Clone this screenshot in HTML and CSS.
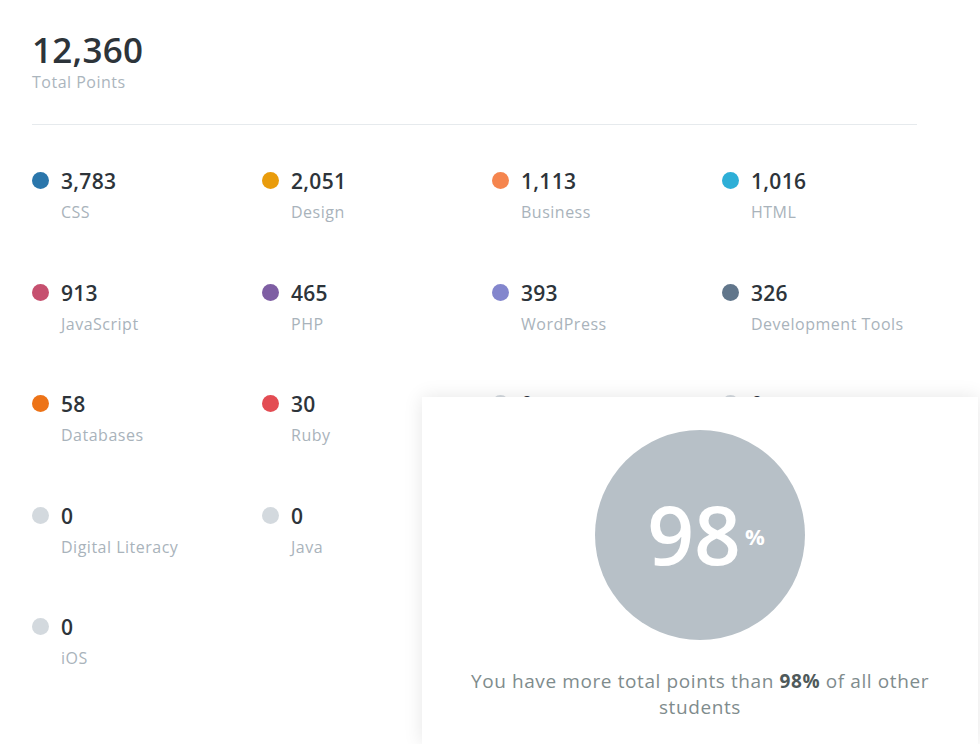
FILE: index.html
```html
<!DOCTYPE html>
<html>
<head>
<meta charset="utf-8">
<link rel="stylesheet" href="styles.css">
</head>
<body>
<div class="page">
  <div class="total">
    <div class="total-num">12,360</div>
    <div class="total-label">Total Points</div>
  </div>
  <hr class="divider">
  <div class="grid">
    <div class="item"><span class="dot c-css"></span><div><div class="num">3,783</div><div class="lbl">CSS</div></div></div>
    <div class="item"><span class="dot c-design"></span><div><div class="num">2,051</div><div class="lbl">Design</div></div></div>
    <div class="item"><span class="dot c-business"></span><div><div class="num">1,113</div><div class="lbl">Business</div></div></div>
    <div class="item"><span class="dot c-html"></span><div><div class="num">1,016</div><div class="lbl">HTML</div></div></div>
    <div class="item"><span class="dot c-js"></span><div><div class="num">913</div><div class="lbl">JavaScript</div></div></div>
    <div class="item"><span class="dot c-php"></span><div><div class="num">465</div><div class="lbl">PHP</div></div></div>
    <div class="item"><span class="dot c-wp"></span><div><div class="num">393</div><div class="lbl">WordPress</div></div></div>
    <div class="item"><span class="dot c-dev"></span><div><div class="num">326</div><div class="lbl">Development Tools</div></div></div>
    <div class="item"><span class="dot c-db"></span><div><div class="num">58</div><div class="lbl">Databases</div></div></div>
    <div class="item"><span class="dot c-ruby"></span><div><div class="num">30</div><div class="lbl">Ruby</div></div></div>
    <div class="item"><span class="dot c-none"></span><div><div class="num">0</div><div class="lbl">Python</div></div></div>
    <div class="item"><span class="dot c-none"></span><div><div class="num">0</div><div class="lbl">Game Development</div></div></div>
    <div class="item"><span class="dot c-none"></span><div><div class="num">0</div><div class="lbl">Digital Literacy</div></div></div>
    <div class="item"><span class="dot c-none"></span><div><div class="num">0</div><div class="lbl">Java</div></div></div>
    <div class="item"><span class="dot c-none"></span><div><div class="num">0</div><div class="lbl">C#</div></div></div>
    <div class="item"><span class="dot c-none"></span><div><div class="num">0</div><div class="lbl">Android</div></div></div>
    <div class="item"><span class="dot c-none"></span><div><div class="num">0</div><div class="lbl">iOS</div></div></div>
  </div>
</div>
<div class="panel">
  <div class="circle"><span class="pct">98</span><span class="pct-sign">%</span></div>
  <p class="rank">You have more total points than <strong>98%</strong> of all other students</p>
</div>
</body>
</html>
```
FILE: styles.css
```css
html, body {
  margin: 0;
  padding: 0;
  background: #fff;
  overflow: hidden;
}
body {
  font-family: "Open Sans", "Noto Sans", sans-serif;
  width: 980px;
  height: 744px;
  position: relative;
}
.page {
  padding: 30px 0 0 32px;
}
.total-num {
  font-size: 35px;
  font-weight: 600;
  color: #2d343a;
  line-height: 40px;
  letter-spacing: 0.3px;
}
.total-label {
  font-size: 16px;
  color: #abb5bd;
  line-height: 20px;
  margin-top: 2px;
  letter-spacing: 0.5px;
}
.divider {
  width: 885px;
  margin: 32px 0 0 0;
  border: 0;
  border-top: 1px solid #e6eaed;
  height: 0;
}
.grid {
  display: grid;
  grid-template-columns: repeat(4, 230px);
  grid-auto-rows: 111.5px;
  margin-top: 44px;
}
.item {
  display: flex;
  align-items: flex-start;
  gap: 12px;
}
.dot {
  width: 17px;
  height: 17px;
  border-radius: 50%;
  flex: none;
  margin-top: 3px;
}
.num {
  font-size: 21px;
  font-weight: 600;
  color: #2d343a;
  line-height: 24px;
  letter-spacing: 0.3px;
}
.lbl {
  font-size: 16px;
  color: #a9b3bb;
  line-height: 20px;
  margin-top: 9px;
  letter-spacing: 0.5px;
}
.c-css { background: #2a76ab; }
.c-design { background: #e99c0c; }
.c-business { background: #f5854e; }
.c-html { background: #2eafd7; }
.c-js { background: #c6506f; }
.c-php { background: #7e5ea3; }
.c-wp { background: #8386cd; }
.c-dev { background: #61768b; }
.c-db { background: #ed7317; }
.c-ruby { background: #e34c53; }
.c-none { background: #d3d9de; }

.panel {
  position: absolute;
  left: 422px;
  top: 397px;
  width: 556px;
  height: 347px;
  background: #fff;
  box-shadow: 0 0 18px rgba(0, 0, 0, 0.1);
  box-sizing: border-box;
  padding: 33px 30px 0;
  text-align: center;
}
.circle {
  width: 210px;
  height: 210px;
  border-radius: 50%;
  background: #b7c0c7;
  margin: 0 auto;
  display: flex;
  align-items: center;
  justify-content: center;
  color: #fff;
}
.pct {
  font-size: 82px;
  font-weight: 600;
  line-height: 1;
  margin-left: 12px;
  margin-top: -4px;
}
.pct-sign {
  font-size: 22px;
  font-weight: 700;
  line-height: 1;
  margin-left: 4px;
  margin-top: 2px;
}
.rank {
  margin: 28px 0 0;
  font-size: 19px;
  line-height: 26px;
  color: #7f8c8d;
  letter-spacing: 0.6px;
}
.rank strong {
  color: #4f5a5b;
  font-weight: 700;
}
```
